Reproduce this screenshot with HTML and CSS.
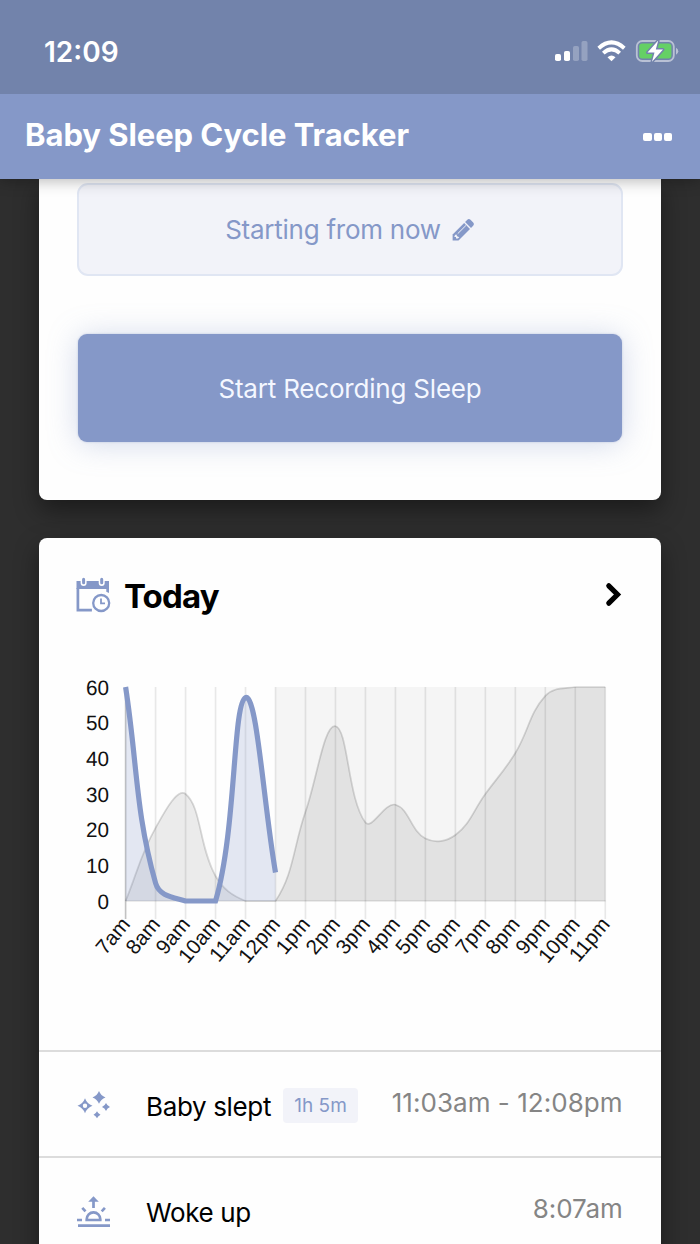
FILE: index.html
```html
<!DOCTYPE html>
<html lang="en">
<head>
<meta charset="utf-8">
<title>Baby Sleep Cycle Tracker</title>
<link rel="stylesheet" href="styles.css">
</head>
<body>
<div class="status">
  <span class="clock">12:09</span>
  <svg class="status-icons" width="126" height="28" viewBox="552 37 126 28">
    <g fill="#fff">
      <rect x="555" y="54" width="6" height="7" rx="1.8"/>
      <rect x="564" y="51" width="6" height="10" rx="1.8"/>
      <g opacity=".25"><rect x="573" y="46" width="6" height="15" rx="1.8"/><rect x="581.5" y="41" width="6" height="20" rx="1.8"/></g>
      <path d="M611.5 61.2l-4-4q4-3.200 8 0z"/>
    </g>
    <g fill="none" stroke="#fff" stroke-width="3.900">
      <path d="M598.700 48.200q12.800-11.600 25.600 0"/>
      <path d="M603.300 53.100q8.200-7.400 16.400 0"/>
    </g>
    <rect x="636.800" y="41" width="37" height="20" rx="5.500" fill="none" stroke="#fff" stroke-opacity=".5" stroke-width="1.800"/>
    <path d="M676 47.800v7q2.300-1 2.300-3.500t-2.300-3.500z" fill="#fff" opacity=".5"/>
    <rect x="639.200" y="43.500" width="32.200" height="15" rx="3" fill="#65d065"/>
    <path d="M658.200 40.600l-10.700 12h7l-2.500 9.200 11-12.200h-7.200z" fill="#fff" stroke="#7283ab" stroke-width="3" stroke-linejoin="round" paint-order="stroke"/>
  </svg>
</div>
<header class="appbar">
  <h1 class="app-title">Baby Sleep Cycle Tracker</h1>
  <div class="more"><i class="dot"></i><i class="dot"></i><i class="dot"></i></div>
</header>
<main class="content">
  <section class="card record">
    <div class="start-time"><span class="start-label">Starting from now</span>
      <svg width="23" height="23" viewBox="0 0 23 23"><path d="M15.300 1.800q1.500-1.600 3.200 0l2.700 2.700q1.600 1.600 0 3.200l-2.200 2.200-5.900-5.900z" fill="#8598c8"/><path d="M12.100 5l5.900 5.900L6.500 22.400H.6v-5.900z" fill="#8598c8"/><path d="M5.700 15.700l8.200-8.200" stroke="#f2f3f9" stroke-width="1"/><path d="M2.900 17.300l1.300-1.100 1 2 2.100 1-1.400 1.400H4v-1.700H2.300z" fill="#f2f3f9"/></svg>
    </div>
    <div class="record-btn"><span class="record-label">Start Recording Sleep</span></div>
  </section>
  <section class="card today">
    <div class="today-head">
      <svg width="36" height="36" viewBox="76 577 36 36">
        <path d="M77.900 588v22.200h14" fill="none" stroke="#8598c8" stroke-width="2.700"/>
        <path d="M76.500 581h32.500v8H76.500z" fill="#8598c8"/><path d="M106.300 588h2.700v5l-2.700-1.200z" fill="#8598c8"/>
        <path d="M83.600 580v3M101.700 580v3" stroke="#fff" stroke-width="6" stroke-linecap="round"/>
        <path d="M83.600 579.300v3.500M101.700 579.300v3.500" stroke="#8598c8" stroke-width="3" stroke-linecap="round"/>
        <circle cx="101.200" cy="603" r="8" fill="#fff" stroke="#8598c8" stroke-width="2.300"/>
        <path d="M101 598.400v4.900h4" fill="none" stroke="#8598c8" stroke-width="1.800"/>
      </svg>
      <h2 class="today-title">Today</h2>
      <svg width="18" height="26" viewBox="605 582 18 26"><path d="M608.800 585.800l8.700 8.700-8.700 8.700" fill="none" stroke="#000" stroke-width="5.200" stroke-linecap="round" stroke-linejoin="miter"/></svg>
    </div>
    <svg class="chart" width="620" height="310" viewBox="40 670 620 310">
      <rect x="275.500" y="687" width="330" height="214" fill="#000" fill-opacity=".034"/>
      <path id="grid" stroke="#000" stroke-opacity=".085" stroke-width="1.700"/>
      <path d="M125.600 687v232" stroke="#000" stroke-opacity=".16" stroke-width="1.600"/>
      <path d="M125.600 901h480" stroke="#000" stroke-opacity=".1" stroke-width="1.500"/>
      <path id="usual-area" fill="#000" fill-opacity=".073"/>
      <path id="usual-line" fill="none" stroke="#000" stroke-opacity=".15" stroke-width="1.700"/>
      <path id="actual-area" fill="#8598c8" fill-opacity=".22"/>
      <path id="actual-line" fill="none" stroke="#8598c8" stroke-width="5.200"/>
      <g class="axis" id="y-labels"></g>
      <g class="axis" id="x-labels"></g>
    </svg>
    <div class="event">
      <svg class="event-icon" width="36" height="36" viewBox="76 1089 36 36">
        <g fill="#8598c8">
        <path fill-rule="evenodd" d="M85 1100.200q2 5.500 7.500 7.500-5.500 2-7.500 7.500-2-5.500-7.500-7.500 5.500-2 7.500-7.500zm0 5.300a2.200 2.200 0 100 4.400 2.200 2.200 0 000-4.400z"/>
        <path d="M99 1093q1.800 4.600 6.500 6.400-4.700 1.800-6.500 6.400-1.800-4.600-6.500-6.400 4.700-1.800 6.500-6.400z"/>
        <path d="M106 1105q1.200 2.800 4 4-2.800 1.200-4 4-1.200-2.800-4-4 2.800-1.200 4-4zM97 1113.200q1.100 2.400 3.500 3.500-2.400 1.100-3.500 3.500-1.100-2.400-3.500-3.500 2.400-1.100 3.500-3.500z"/>
        </g>
      </svg>
      <span class="event-name">Baby slept</span><span class="badge">1h 5m</span><span class="time range">11:03am - 12:08pm</span>
    </div>
    <div class="event">
      <svg class="event-icon" width="36" height="36" viewBox="76 1195 36 36">
        <path d="M93.500 1209v-8M82.300 1208.800l3.200 3.500M104.900 1208.800l-3.200 3.500M77 1221h5M105 1221h5M78 1226.700h32" stroke="#8598c8" stroke-width="2.700" fill="none"/>
        <path d="M93.500 1197.300l5.300 5.500H88.200z" fill="#8598c8"/>
        <path d="M86.700 1221v-.8a6.800 6.800 0 0113.600 0v.8z" fill="none" stroke="#8598c8" stroke-width="2.700"/>
      </svg>
      <span class="event-name">Woke up</span><span class="time">8:07am</span>
    </div>
  </section>
</main>
<script src="chart.js"></script>
</body>
</html>
```
FILE: styles.css
```css
* { box-sizing: border-box; }
body {
  margin: 0;
  height: 1244px;
  overflow: hidden;
  background: #2e2e2e;
  font-family: Inter, "Liberation Sans", sans-serif;
  display: flex;
  flex-direction: column;
}
svg { display: block; flex: none; }
.status {
  height: 93.500px;
  flex: none;
  background: #7283ab;
  color: #fff;
  display: flex;
  justify-content: space-between;
  padding: 37px 22px 0 44px;
  position: relative;
  z-index: 2;
}
.clock { font-size: 28px; font-weight: 600; line-height: 30px; white-space: nowrap; }
.status-icons { overflow: visible; }
.appbar {
  height: 85.500px;
  flex: none;
  background: #8598c8;
  color: #fff;
  display: flex;
  align-items: center;
  justify-content: space-between;
  padding: 0 28px 0 25px;
  box-shadow: 0 2px 14px rgba(0, 0, 0, .28);
  position: relative;
  z-index: 1;
}
.app-title { margin: 0 0 3px; font-size: 31px; font-weight: 700; letter-spacing: -.06px; white-space: nowrap; }
.more { display: flex; gap: 2px; padding-top: 2px; }
.dot { width: 8.200px; height: 8.200px; background: #fff; border-radius: 2px; }
.content { padding: 0 39.400px; display: flex; flex-direction: column; gap: 38px; }
.card { background: #fefefe; border-radius: 8px; box-shadow: 0 10px 24px rgba(0, 0, 0, .42); flex: none; }
.record {
  height: 320.500px;
  border-radius: 0 0 8px 8px;
  padding: 4px 37.500px 0;
  display: flex;
  flex-direction: column;
  gap: 58.500px;
}
.start-time {
  height: 92.500px;
  border: 2px solid #e0e6f3;
  border-radius: 11px;
  background: #f2f3f9;
  color: #8598c8;
  display: flex;
  align-items: center;
  justify-content: center;
  gap: 11px;
}
.start-label, .record-label { font-size: 26px; white-space: nowrap; letter-spacing: -.25px; }
.record-label { letter-spacing: -.2px; padding-top: 1px; }
.start-label { padding-top: 1px; }
.record-btn {
  height: 107.500px;
  margin: 0 1px;
  border-radius: 9px;
  background: #8598c8;
  color: #f4f7ff;
  display: flex;
  align-items: center;
  justify-content: center;
  box-shadow: 0 2px 30px rgba(133, 152, 200, .36), 0 0 2px rgba(133, 152, 200, .5);
}
.today { height: 760px; }
.today-head { height: 132px; padding: 39px 38px 0 36.500px; display: flex; align-items: flex-start; }
.today-title { margin: -1px auto 0 12px; line-height: 40px; font-size: 33px; font-weight: 700; letter-spacing: -.8px; }
.today-head > svg:last-child { margin-top: 5px; }
.chart { margin-left: .6px; }
.axis {
  font-family: "Liberation Sans", Arial, sans-serif;
  font-size: 20.700px;
  fill: #111;
  text-anchor: end;
  text-rendering: geometricPrecision;
}
.event { height: 106.500px; border-top: 2px solid #dcdcdc; display: flex; align-items: center; padding: 3px 38px 0 36.600px; }
.chart + .event { margin-top: 70px; }
.event-name { margin-left: 34px; font-size: 26px; letter-spacing: -.35px; color: #000; white-space: nowrap; padding-top: 2px; }
.badge {
  width: 75px;
  height: 35px;
  margin-left: 12px;
  border-radius: 4px;
  background: #f2f3f9;
  color: #8598c8;
  font-size: 19px;
  line-height: 36px;
  text-align: center;
  white-space: nowrap;
}
.time { margin-left: auto; padding-bottom: 6px; font-size: 26px; letter-spacing: -.1px; color: #858585; white-space: nowrap; }
.range { letter-spacing: .04px; }
```
FILE: chart.js
```js
const X0 = 125.6, STEP = 29.98, TOP = 687, BASE = 901;
const usual = [0, 20.5, 30, 7, 0, 0, 25, 49, 22, 27, 17.5, 18.5, 30, 41.5, 57.5, 60, 60];
const actual = [60, 5, 0, 0, 57, 8];
const hours = ['7am', '8am', '9am', '10am', '11am', '12pm', '1pm', '2pm', '3pm', '4pm', '5pm', '6pm', '7pm', '8pm', '9pm', '10pm', '11pm'];
const clampY = y => Math.max(TOP, Math.min(BASE, y));

// Smooth line with control points kept inside the plot area.
function curve(values) {
  const p = values.map((v, i) => [X0 + i * STEP, BASE - v * (BASE - TOP) / 60]);
  const c = p.map((cur, i) => {
    const a = p[i - 1] || cur, b = p[i + 1] || cur;
    const da = Math.hypot(cur[0] - a[0], cur[1] - a[1]);
    const db = Math.hypot(b[0] - cur[0], b[1] - cur[1]);
    const fa = 0.4 * da / (da + db), fb = 0.4 * db / (da + db);
    const dx = b[0] - a[0], dy = b[1] - a[1];
    return [cur[0] - fa * dx, clampY(cur[1] - fa * dy), cur[0] + fb * dx, clampY(cur[1] + fb * dy)];
  });
  let d = `M${p[0]}`;
  for (let i = 1; i < p.length; i++) d += `C${c[i - 1][2]},${c[i - 1][3]} ${c[i][0]},${c[i][1]} ${p[i]}`;
  const last = p[p.length - 1][0];
  return { line: d, area: `${d}L${last},${BASE}H${X0}Z` };
}
function setPath(id, d) { document.getElementById(id).setAttribute('d', d); }
const u = curve(usual), a = curve(actual);
setPath('usual-line', u.line);
setPath('usual-area', u.area);
setPath('actual-line', a.line);
setPath('actual-area', a.area);
setPath('grid', hours.map((h, i) => `M${X0 + i * STEP} ${TOP}V919`).join(''));
document.getElementById('y-labels').innerHTML = [60, 50, 40, 30, 20, 10, 0]
  .map((v, i) => `<text x="109" y="${694.6 + i * 35.67}">${v}</text>`).join('');
document.getElementById('x-labels').innerHTML = hours
  .map((h, i) => `<text transform="translate(${X0 + 1 + i * STEP} 921) rotate(-50)" dy="6">${h}</text>`).join('');
```
